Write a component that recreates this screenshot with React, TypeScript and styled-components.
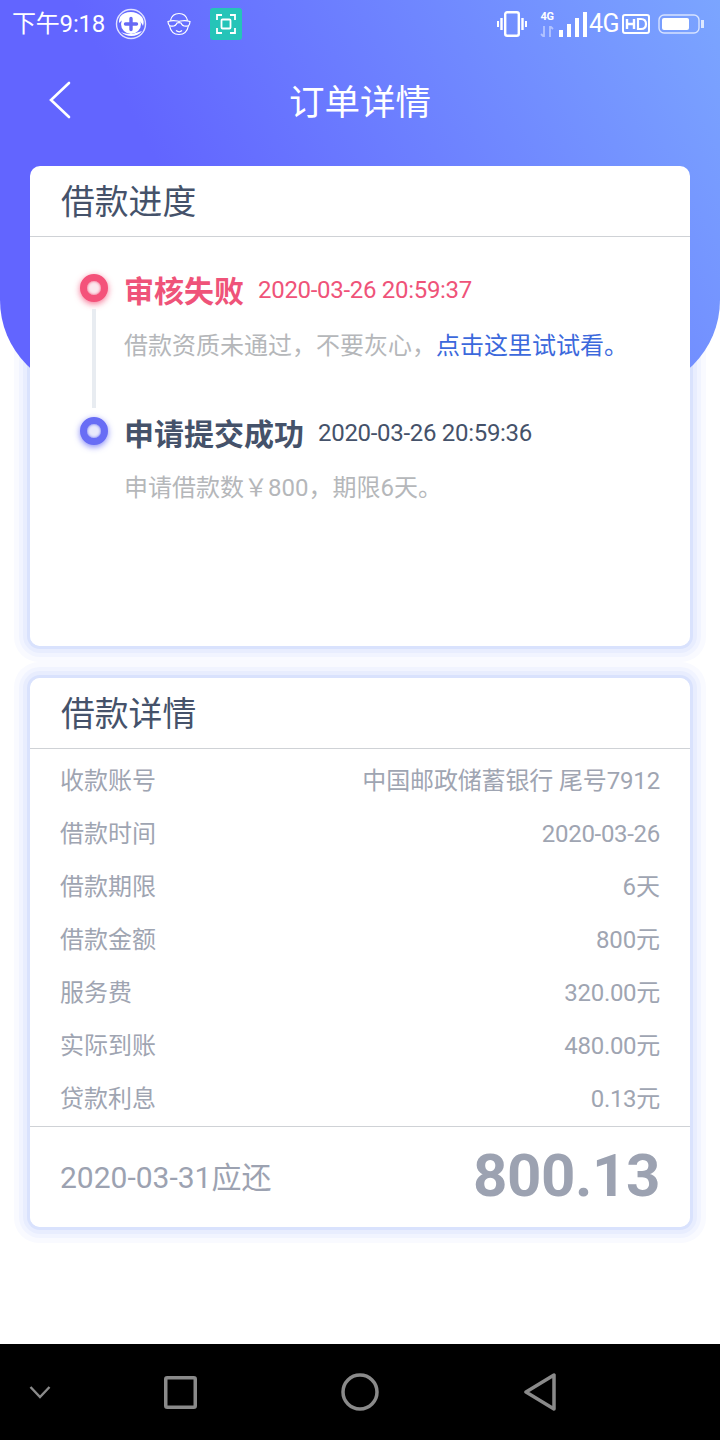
import React from 'react'
import styled, { createGlobalStyle } from 'styled-components'

const GlobalStyle = createGlobalStyle`
    html, body {
        margin: 0;
        padding: 0;
        background: #fff;
    }
    body {
        font-family: Roboto, "Noto Sans CJK SC", sans-serif;
    }
`

const Screen = styled.div`
    position: relative;
    isolation: isolate;
    width: 720px;
    height: 1440px;
    overflow: hidden;
    display: flex;
    flex-direction: column;
    background: #fff;
`
const Backdrop = styled.div`
    position: absolute;
    z-index: -1;
    top: 0;
    left: 0;
    width: 720px;
    height: 392px;
    border-bottom-left-radius: 92px;
    border-bottom-right-radius: 92px;
    background: linear-gradient(62deg, #6265ff 30%, #7ba5ff 100%);
`
const Main = styled.main`
    flex: 1;
    display: flex;
    flex-direction: column;
`
const StatusBar = styled.div`
    height: 48px;
    display: flex;
    align-items: center;
    justify-content: space-between;
    padding: 0 16px 0 12px;
    color: #fff;
`
const StatusGroup = styled.div`
    display: flex;
    align-items: center;
`
const Clock = styled.span`
    font-size: 24px;
    letter-spacing: -0.2px;
    line-height: 48px;
    width: 103px;
    white-space: nowrap;
`
const FaceSlot = styled.div`
    margin-left: 20px;
    display: flex;
`
const AppBadge = styled.div`
    width: 32px;
    height: 32px;
    border-radius: 3px;
    background: #25c4b8;
    display: flex;
    align-items: center;
    justify-content: center;
    margin-left: 19px;
`
const NetworkStack = styled.div`
    width: 18px;
    margin: 0 3px 0 11px;
    display: flex;
    flex-direction: column;
    align-items: center;
    gap: 4px;
`
const NetworkLabel = styled.span`
    font-size: 11px;
    font-weight: 700;
    line-height: 10px;
    letter-spacing: -0.3px;
`
const StatusLabel = styled.span`
    font-size: 25px;
    line-height: 48px;
    letter-spacing: -0.6px;
    margin: 0 3px 0 2px;
`
const BatterySlot = styled.div`
    margin-left: 8px;
    display: flex;
`
const TopNav = styled.div`
    height: 105px;
    box-sizing: border-box;
    padding-top: 5px;
    position: relative;
    display: flex;
    align-items: center;
    justify-content: center;
`
const BackButton = styled.div`
    position: absolute;
    left: 48px;
    top: 33px;
    height: 38px;
    display: flex;
`
const PageTitle = styled.h1`
    margin: 0;
    font-size: 35.5px;
    font-weight: 400;
    line-height: 100px;
    color: #fff;
`
const Cards = styled.div`
    margin-top: 13px;
    padding: 0 30px;
    display: flex;
    flex-direction: column;
    gap: 32px;
`
const Card = styled.section<{ $height: number }>`
    position: relative;
    height: ${p => p.$height}px;
    box-sizing: border-box;
    background: #fff;
    border-radius: 10px;
    display: flex;
    flex-direction: column;
    &::before {
        content: '';
        position: absolute;
        z-index: -2;
        inset: 0;
        border-radius: 10px;
        box-shadow:
            0 0 0 3px #d9e2fd,
            0 0 0 7px #e8edfe,
            0 0 0 11px #f1f4ff,
            0 0 0 16px #f9faff;
    }
`
const CardHeader = styled.h2`
    margin: 0;
    height: 70px;
    padding-left: 31px;
    border-bottom: 1px solid #cfd2d6;
    font-size: 33.8px;
    font-weight: 400;
    line-height: 73px;
    color: #45526a;
    white-space: nowrap;
`
const Timeline = styled.div`
    padding: 27px 0 0 51px;
    display: flex;
    flex-direction: column;
`
const Step = styled.div<{ $height: number }>`
    position: relative;
    height: ${p => p.$height}px;
    display: grid;
    grid-template-columns: 26px 1fr;
    column-gap: 17px;
    align-content: start;
`
const Dot = styled.div<{ $color: string; $core: string }>`
    width: 28px;
    height: 28px;
    box-sizing: border-box;
    margin-top: 10px;
    margin-left: -1px;
    border-radius: 50%;
    border: 7px solid ${p => p.$color};
    background: ${p => p.$core};
    box-shadow: 0 2px 6px ${p => p.$color}cc, inset 0 0 3px ${p => p.$color};
    filter: blur(0.7px);
`
const Rail = styled.div`
    position: absolute;
    left: 11px;
    top: 45px;
    width: 4px;
    height: 99px;
    background: #e8ecf1;
`
const StepHead = styled.div`
    display: flex;
    align-items: center;
    height: 50px;
    white-space: nowrap;
`
const StepTitle = styled.span<{ $color: string }>`
    font-size: 30px;
    font-weight: 700;
    color: ${p => p.$color};
    margin-right: 14px;
`
const StepTime = styled.span<{ $color: string }>`
    font-size: 24px;
    letter-spacing: -0.3px;
    margin-top: 2px;
    color: ${p => p.$color};
`
const StepNote = styled.p<{ $gap: number }>`
    grid-column: 2;
    margin: ${p => p.$gap}px 0 0;
    font-size: 24px;
    line-height: 50px;
    color: #b5b7ba;
    white-space: nowrap;
`
const StepLink = styled.span`
    color: #3c69dc;
`
const Rows = styled.div`
    padding-top: 6px;
    display: flex;
    flex-direction: column;
`
const Row = styled.div`
    height: 53px;
    padding: 0 30px;
    display: flex;
    align-items: baseline;
    justify-content: space-between;
    font-size: 24px;
    line-height: 53px;
    color: #9fa5b2;
`
const RowValue = styled.span<{ $tight: number }>`
    letter-spacing: ${p => p.$tight}px;
`
const Summary = styled.div`
    flex: 1;
    padding: 0 30px 4px;
    border-top: 1px solid #cfd2d6;
    display: flex;
    align-items: center;
    justify-content: space-between;
    color: #9ca2b1;
`
const DueLabel = styled.span`
    font-size: 30px;
`
const DueAmount = styled.span`
    font-size: 60px;
    font-weight: 700;
    letter-spacing: -0.4px;
`
const NavBar = styled.nav`
    height: 96px;
    background: #000;
    display: grid;
    grid-template-columns: 80px 200px 160px 200px 80px;
    align-items: center;
    justify-items: center;
`

const PlusIcon = () => (
    <svg width="32" height="32" viewBox="0 0 32 32" fill="none">
        <circle cx="16" cy="16" r="14.500" stroke="#fff" strokeWidth="1.400" opacity=".8" />
        <path d="M5 9C9 3 21 2 27 9c2 3 2 6 1 9-2-5-6-8-12-8S7 12 4 15c0-2 0-4 1-6zM27 23c-4 6-15 7-21 1 4 2 8 2 11 2 4-1 7-2 10-3z" fill="#fff" />
        <circle cx="16" cy="16" r="10" fill="#fff" />
        <path d="M16 10.500v11M10.500 16h11" stroke="#6669f5" strokeWidth="3.400" strokeLinecap="round" />
    </svg>
)

const FaceIcon = () => (
    <svg width="24" height="24" viewBox="0 0 24 24" fill="none" stroke="#fff" strokeWidth="1.200">
        <path d="M3.500 8.500C4.500 4 8 1.500 12 1.500s7.500 2.500 8.500 7" />
        <path d="M2.500 13.500C3.500 19 7 22.500 12 22.500s8.500-3.500 9.500-9" />
        <path d="M1 9.500c3-1 6-1 9.500-.5.800.4 2.200.4 3 0 3.500-.5 6.500-.5 9.500.5-.2 2-.8 4.500-2.500 4.500-3 .6-5.500-.5-6.500-3-.4-.4-3.600-.4-4 0-1 2.500-3.500 3.600-6.500 3-1.800-.3-2.300-2.500-2.500-4.500z" />
        <path d="M9 18.500c2 1.500 4.500 1.500 6 0" />
    </svg>
)

const ScanIcon = () => (
    <svg width="20" height="20" viewBox="0 0 20 20" fill="none" stroke="#fff" strokeWidth="1.800">
        <path d="M1 6V1h5M14 1h5v5M19 14v5h-5M6 19H1v-5" />
        <rect x="5.500" y="5.500" width="9" height="9" rx="1" />
    </svg>
)

const VibrateIcon = () => (
    <svg width="30" height="26" viewBox="0 0 30 26" fill="none" stroke="#fff">
        <rect x="8.200" y="1.200" width="13.600" height="23.600" rx="2" strokeWidth="2.400" />
        <path d="M4.500 7v12M25.500 7v12" strokeWidth="2.400" />
        <path d="M1 10v6M29 10v6" strokeWidth="2" />
    </svg>
)

const TransferIcon = () => (
    <svg width="14" height="11" viewBox="0 0 14 11" fill="none" stroke="#fff" strokeWidth="1.800" opacity=".45">
        <path d="M4 0v11M1 8l3 3M10 11V0M10 0l3 3" />
    </svg>
)

const SignalIcon = () => (
    <svg width="28" height="25" viewBox="0 0 28 25" fill="#fff">
        <rect x="0" y="18" width="4" height="7" />
        <rect x="8" y="12" width="4" height="13" />
        <rect x="16" y="6" width="4" height="19" />
        <rect x="24" y="0" width="4" height="25" />
    </svg>
)

const HdIcon = () => (
    <svg width="28" height="20" viewBox="0 0 28 20" fill="none" stroke="#fff" strokeWidth="2">
        <rect x="1" y="1" width="26" height="18" rx="2" />
        <path d="M5 5v10M12 5v10M5 10h7" strokeWidth="2.400" />
        <path d="M16 5v10h3c3.500 0 5-2 5-5s-1.500-5-5-5z" strokeWidth="2.200" />
    </svg>
)

const BatteryIcon = () => (
    <svg width="46" height="20" viewBox="0 0 46 20">
        <rect x="1" y="1" width="40" height="18" rx="5" fill="none" stroke="#fff" strokeWidth="1.400" opacity=".7" />
        <rect x="4" y="4" width="27" height="12" rx="2" fill="#fff" />
        <rect x="43" y="6" width="3" height="8" fill="#fff" opacity=".75" />
    </svg>
)

const Chevron = () => (
    <svg width="24" height="38" viewBox="0 0 24 38" fill="none" stroke="#fff" strokeWidth="2.600" strokeLinecap="round">
        <path d="M21 2L3 19l18 17" />
    </svg>
)

const HideIcon = () => (
    <svg width="22" height="14" viewBox="0 0 22 14" fill="none" stroke="#8a8a8a" strokeWidth="2.400">
        <path d="M1.500 2l9.500 10 9.500-10" />
    </svg>
)

const SquareIcon = () => (
    <svg width="33" height="33" viewBox="0 0 33 33" fill="none" stroke="#8a8a8a" strokeWidth="3.500">
        <rect x="1.750" y="1.750" width="29.500" height="29.500" rx="1.500" />
    </svg>
)

const CircleIcon = () => (
    <svg width="38" height="38" viewBox="0 0 38 38" fill="none" stroke="#8a8a8a" strokeWidth="3.500">
        <circle cx="19" cy="19" r="17" />
    </svg>
)

const BackIcon = () => (
    <svg width="34" height="38" viewBox="0 0 34 38" fill="none" stroke="#8a8a8a" strokeWidth="3.500" strokeLinejoin="round">
        <path d="M31 2v34L3 19z" />
    </svg>
)

const details = [
    ['收款账号', '中国邮政储蓄银行 尾号7912', -0.15],
    ['借款时间', '2020-03-26', -0.3],
    ['借款期限', '6天', 0],
    ['借款金额', '800元', -0.1],
    ['服务费', '320.00元', -0.3],
    ['实际到账', '480.00元', -0.3],
    ['贷款利息', '0.13元', -0.3],
] as const

export default function App() {
    return (
        <Screen>
            <GlobalStyle />
            <Backdrop />
            <Main>
                <StatusBar>
                    <StatusGroup>
                        <Clock>下午9:18</Clock>
                        <PlusIcon />
                        <FaceSlot>
                            <FaceIcon />
                        </FaceSlot>
                        <AppBadge>
                            <ScanIcon />
                        </AppBadge>
                    </StatusGroup>
                    <StatusGroup>
                        <VibrateIcon />
                        <NetworkStack>
                            <NetworkLabel>4G</NetworkLabel>
                            <TransferIcon />
                        </NetworkStack>
                        <SignalIcon />
                        <StatusLabel>4G</StatusLabel>
                        <HdIcon />
                        <BatterySlot>
                            <BatteryIcon />
                        </BatterySlot>
                    </StatusGroup>
                </StatusBar>
                <TopNav>
                    <BackButton>
                        <Chevron />
                    </BackButton>
                    <PageTitle>订单详情</PageTitle>
                </TopNav>
                <Cards>
                    <Card $height={480}>
                        <CardHeader>借款进度</CardHeader>
                        <Timeline>
                            <Step $height={143}>
                                <Dot $color="#f4527a" $core="#fbe9ee" />
                                <StepHead>
                                    <StepTitle $color="#ef5379">审核失败</StepTitle>
                                    <StepTime $color="#ef5379">2020-03-26 20:59:37</StepTime>
                                </StepHead>
                                <StepNote $gap={7}>
                                    借款资质未通过，不要灰心，<StepLink>点击这里试试看。</StepLink>
                                </StepNote>
                                <Rail />
                            </Step>
                            <Step $height={144}>
                                <Dot $color="#686df5" $core="#e9eafb" />
                                <StepHead>
                                    <StepTitle $color="#45526a">申请提交成功</StepTitle>
                                    <StepTime $color="#45526a">2020-03-26 20:59:36</StepTime>
                                </StepHead>
                                <StepNote $gap={6}>申请借款数￥800，期限6天。</StepNote>
                            </Step>
                        </Timeline>
                    </Card>
                    <Card $height={549}>
                        <CardHeader>借款详情</CardHeader>
                        <Rows>
                            {details.map(([label, value, tight]) => (
                                <Row key={label}>
                                    <span>{label}</span>
                                    <RowValue $tight={tight}>{value}</RowValue>
                                </Row>
                            ))}
                        </Rows>
                        <Summary>
                            <DueLabel>2020-03-31应还</DueLabel>
                            <DueAmount>800.13</DueAmount>
                        </Summary>
                    </Card>
                </Cards>
            </Main>
            <NavBar>
                <HideIcon />
                <SquareIcon />
                <CircleIcon />
                <BackIcon />
            </NavBar>
        </Screen>
    )
}
